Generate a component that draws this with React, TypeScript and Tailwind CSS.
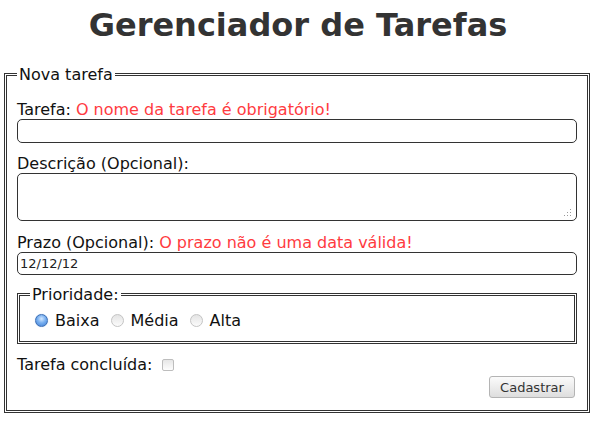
import React from 'react';

const font = "font-['DejaVu_Sans','Liberation_Sans',sans-serif]";

const Radio: React.FC<{ checked?: boolean; label: string }> = ({ checked, label }) => (
  <label className="flex items-center">
    {checked ? (
      <span className="block h-[13px] w-[13px] rounded-full border border-[#3d6fb5] bg-[radial-gradient(circle_at_50%_35%,#d4e8ff_0%,#79b0f0_45%,#3f7fd6_100%)] shadow-[0_0_1px_#9cc3f0]" />
    ) : (
      <span className="block h-[13px] w-[13px] rounded-full border border-[#c4c4c4] bg-[linear-gradient(#e4e4e4,#fbfbfb)]" />
    )}
    <span className="ml-[7px]">{label}</span>
  </label>
);

export default function App() {
  return (
    <div className={`${font} text-[16px] leading-[19px] text-[#111]`}>
      <h1 className="pt-[7px] text-center text-[32px] leading-[37px] font-bold text-[#333]">
        Gerenciador de Tarefas
      </h1>

      <fieldset className="mt-[21px] ml-[4px] w-[586px] border-[3px] border-double border-[#333] px-[10px] pb-[12px]">
        <legend className="px-[2px] leading-[19px]">Nova tarefa</legend>

        <div className="pt-[16px]">
          Tarefa: <span className="text-[#ff3b3f]">O nome da tarefa é obrigatório!</span>
        </div>
        <input className="block h-[24px] w-full rounded-[5px] border border-[#333] px-[2px] text-[13px] outline-none" />

        <div className="mt-[11px]">Descrição (Opcional):</div>
        <div className="relative">
          <textarea className="block h-[48px] w-full resize-none rounded-[5px] border border-[#333] outline-none" />
          <svg className="absolute right-[5px] bottom-[4px]" width="9" height="9" viewBox="0 0 9 9">
            <g fill="#9a9a9a">
              <rect x="7" y="1" width="1" height="1" />
              <rect x="4" y="4" width="1" height="1" />
              <rect x="7" y="4" width="1" height="1" />
              <rect x="1" y="7" width="1" height="1" />
              <rect x="4" y="7" width="1" height="1" />
              <rect x="7" y="7" width="1" height="1" />
            </g>
          </svg>
        </div>

        <div className="mt-[12px]">
          Prazo (Opcional): <span className="text-[#ff3b3f]">O prazo não é uma data válida!</span>
        </div>
        <input
          defaultValue="12/12/12"
          className="block h-[23px] w-full rounded-[5px] border border-[#333] px-[2px] text-[13px] text-[#222] outline-none"
        />

        <fieldset className="mt-[10px] border-[3px] border-double border-[#333] px-[10px] pb-[11px]">
          <legend className="px-[2px] leading-[19px]">Prioridade:</legend>
          <div className="flex h-[20px] items-center gap-[11px] pt-[6px] pl-[5px] box-content">
            <Radio checked label="Baixa" />
            <Radio label="Média" />
            <Radio label="Alta" />
          </div>
        </fieldset>

        <div className="mt-[11px] flex items-center">
          <span>Tarefa concluída:</span>
          <span className="ml-[10px] mt-px block h-[12px] w-[12px] rounded-[2px] border border-[#bdbdbd] bg-[linear-gradient(#e6e6e6,#fdfdfd)]" />
        </div>

        <div className="mt-[2px] flex justify-end pr-[2px]">
          <button className="h-[22px] w-[86px] rounded-[3px] border border-[#b4b4b4] bg-[linear-gradient(#fbfbfb,#dedede)] text-[13px] text-[#333]">
            Cadastrar
          </button>
        </div>
      </fieldset>
    </div>
  );
}
